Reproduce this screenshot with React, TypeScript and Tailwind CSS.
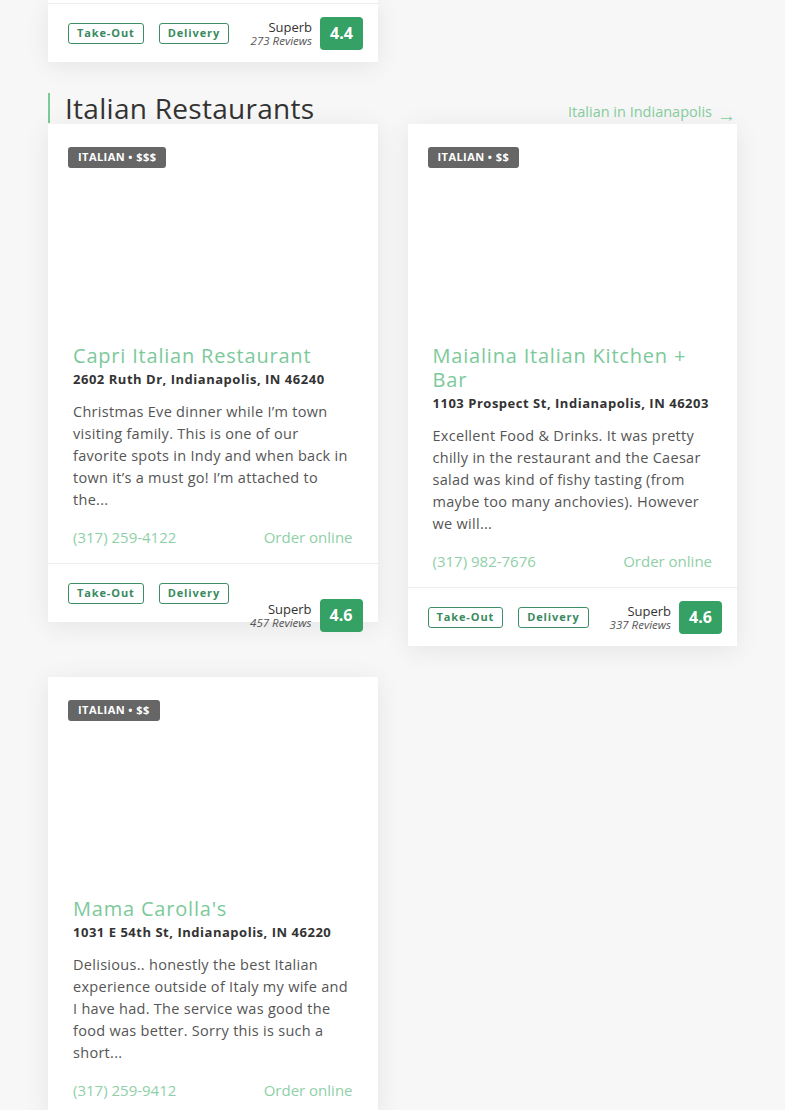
const restaurants = [
  {
    badge: 'ITALIAN • $$$',
    name: 'Capri Italian Restaurant',
    address: '2602 Ruth Dr, Indianapolis, IN 46240',
    review:
      'Christmas Eve dinner while I’m town visiting family. This is one of our favorite spots in Indy and when back in town it’s a must go! I’m attached to the...',
    phone: '(317) 259-4122',
    reviews: 457,
    rating: '4.6',
    drop: true,
  },
  {
    badge: 'ITALIAN • $$',
    name: 'Maialina Italian Kitchen + Bar',
    address: '1103 Prospect St, Indianapolis, IN 46203',
    review:
      'Excellent Food & Drinks. It was pretty chilly in the restaurant and the Caesar salad was kind of fishy tasting (from maybe too many anchovies). However we will...',
    phone: '(317) 982-7676',
    reviews: 337,
    rating: '4.6',
    drop: false,
  },
  {
    badge: 'ITALIAN • $$',
    name: "Mama Carolla's",
    address: '1031 E 54th St, Indianapolis, IN 46220',
    review:
      'Delisious.. honestly the best Italian experience outside of Italy my wife and I have had. The service was good the food was better. Sorry this is such a short...',
    phone: '(317) 259-9412',
    reviews: 0,
    rating: '',
    drop: false,
  },
];

function CardFooter({ reviews, rating, drop }: { reviews: number; rating: string; drop?: boolean }) {
  return (
    <div className="flex items-center justify-between border-t border-[#ececec] pl-[20px] pr-[15px] h-[59px]">
      <div className="flex gap-[15px]">
        {['Take-Out', 'Delivery'].map((t) => (
          <span
            key={t}
            className="border border-[#3e8e66] rounded-[3px] px-[8px] h-[21px] flex items-center text-[11px] font-bold tracking-[0.08em] text-[#3a8a61]"
          >
            {t}
          </span>
        ))}
      </div>
      <div className={`flex items-center gap-[8px] ${drop ? 'translate-y-[22px]' : ''}`}>
        <div className="text-right">
          <div className="text-[13px] leading-[14px] text-[#333]">Superb</div>
          <div className="text-[11.5px] leading-[13px] italic text-[#555]">{reviews} Reviews</div>
        </div>
        <div className="w-[43px] h-[33px] rounded-[4px] bg-[#36a165] text-white font-bold text-[16px] flex items-center justify-center">
          {rating}
        </div>
      </div>
    </div>
  );
}

function RestaurantCard({ r }: { r: (typeof restaurants)[number] }) {
  return (
    <div className="bg-white shadow-[0_4px_24px_rgba(0,0,0,0.08)]">
      <div className="h-[212px] pt-[23px] pl-[20px] flex items-start">
        <span className="bg-[#666] rounded-[3px] px-[10px] h-[21px] flex items-center text-white text-[11px] font-bold tracking-[0.04em]">
          {r.badge}
        </span>
      </div>
      <div className="px-[25px] pt-[8px] pb-[15px]">
        <h3 className="text-[20px] leading-[24px] tracking-[0.04em] text-[#7cc99a]">{r.name}</h3>
        <p className="text-[13px] leading-[22px] font-bold tracking-[0.04em] text-[#333]">{r.address}</p>
        <p className="mt-[11px] text-[14.5px] leading-[22px] tracking-[0.02em] text-[#555]">{r.review}</p>
        <div className="mt-[15px] flex justify-between items-center text-[15px] leading-[22px] text-[#8fd0a8]">
          <span>{r.phone}</span>
          <span>Order online</span>
        </div>
      </div>
      {r.rating && <CardFooter reviews={r.reviews} rating={r.rating} drop={r.drop} />}
    </div>
  );
}

export default function App() {
  return (
    <div
      className="min-h-screen bg-[#f7f7f7] px-[48px] pb-[40px]"
      style={{ fontFamily: '"Open Sans", "Liberation Sans", sans-serif' }}
    >
      <div className="w-[330px] bg-white shadow-[0_4px_24px_rgba(0,0,0,0.08)] pt-[3px]">
        <CardFooter reviews={273} rating="4.4" />
      </div>

      <div className="mt-[31px] mb-[1px] flex items-end justify-between">
        <h2 className="border-l-2 border-[#7cc99a] pl-[15px] text-[28px] leading-[30px] tracking-[0.01em] text-[#333]">
          Italian Restaurants
        </h2>
        <a href="#" className="text-[14.5px] leading-[20px] text-[#86cda0] pr-[1px] mb-[1px] flex items-center gap-[5px]">
          Italian in Indianapolis
          <span className="text-[19px] leading-[20px] font-light translate-y-[3px]">→</span>
        </a>
      </div>

      <div className="grid grid-cols-2 gap-x-[30px] gap-y-[31px] items-start">
        {restaurants.map((r) => (
          <RestaurantCard key={r.name} r={r} />
        ))}
      </div>
    </div>
  );
}
